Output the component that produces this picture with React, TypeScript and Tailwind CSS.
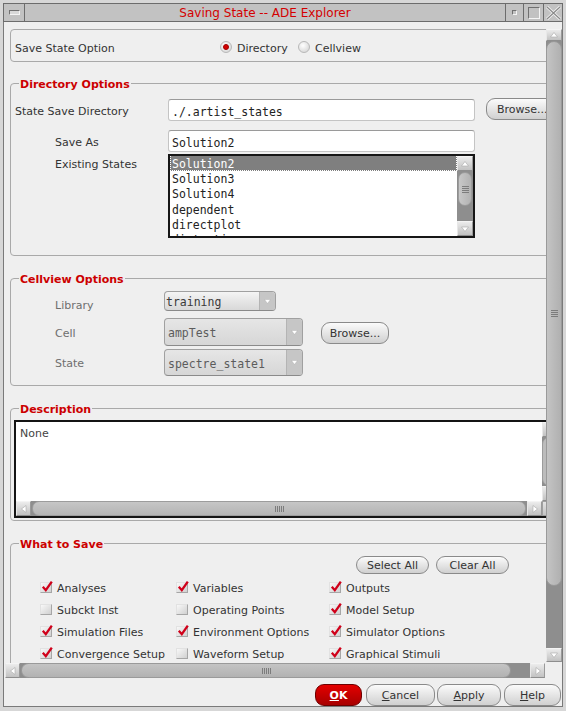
import React from "react";

const MONO = "font-['DejaVu_Sans_Mono',monospace]";

function Tri({ dir }: { dir: "up" | "down" | "left" | "right" }) {
  const pts = {
    up: "1.5,7 5,2.5 8.5,7",
    down: "1.5,3 5,7.5 8.5,3",
    left: "7,1.5 2.5,5 7,8.5",
    right: "3,1.5 7.5,5 3,8.5",
  }[dir];
  return (
    <svg width="10" height="10" viewBox="0 0 10 10">
      <polygon points={pts} fill="#ffffff" stroke="#a8a8a8" strokeWidth="0.6" />
    </svg>
  );
}

function SBtn({ dir, className = "" }: { dir: "up" | "down" | "left" | "right"; className?: string }) {
  return (
    <div
      className={`flex items-center justify-center shrink-0 bg-linear-to-b from-[#ececec] to-[#c2c2c2] border border-t-[#f4f4f4] border-l-[#e8e8e8] border-b-[#8e8e8e] border-r-[#9a9a9a] ${className}`}
    >
      <Tri dir={dir} />
    </div>
  );
}

function HGrip() {
  return (
    <div className="flex gap-[1px]">
      {[0, 1, 2, 3, 4].map((i) => (
        <div key={i} className="w-[1px] h-[6px] bg-[#7c7c7c]" />
      ))}
    </div>
  );
}

function VGrip() {
  return (
    <div className="flex flex-col gap-[1px]">
      {[0, 1, 2, 3].map((i) => (
        <div key={i} className="w-[7px] h-[1px] bg-[#7c7c7c]" />
      ))}
    </div>
  );
}

function Radio({ on }: { on?: boolean }) {
  return (
    <div className="w-[12px] h-[12px] rounded-full border border-[#b8b8b8] bg-[radial-gradient(circle_at_40%_35%,#ffffff,#cfcfcf)] flex items-center justify-center shrink-0">
      {on && <div className="w-[6px] h-[6px] rounded-full bg-[#d40000] border border-[#a00000]" />}
    </div>
  );
}

function CB({ on }: { on?: boolean }) {
  return (
    <div className="relative w-[12px] h-[11px] shrink-0 border border-t-[#e2e2e2] border-l-[#e2e2e2] border-b-[#a6a6a6] border-r-[#a6a6a6] bg-linear-to-br from-[#f8f8f8] to-[#d0d0d0]">
      {on && (
        <svg className="absolute left-[0px] top-[-3px]" width="13" height="13" viewBox="0 0 13 13">
          <path d="M1.8 6.8 L4.8 10.2 L10.8 1.6" fill="none" stroke="#d0001a" strokeWidth="2.3" />
        </svg>
      )}
    </div>
  );
}

function Btn({ children, className = "" }: { children: React.ReactNode; className?: string }) {
  return (
    <div
      className={`flex items-center justify-center shrink-0 rounded-[9px] border border-[#8a8a8a] bg-linear-to-b from-[#fbfbfb] to-[#d0d0d0] text-[#333] pt-[3px] ${className}`}
    >
      {children}
    </div>
  );
}

function Group({ title, className = "", children }: { title?: string; className?: string; children?: React.ReactNode }) {
  return (
    <div className={`relative w-[548px] border border-[#a9a9a9] rounded-[4px] shrink-0 ${className}`}>
      {title && (
        <span className="absolute left-[8px] top-[-6px] px-[1px] bg-[#efefef] text-[#cc0000] font-bold text-[11px] leading-[13px]">
          {title}
        </span>
      )}
      {children}
    </div>
  );
}

function Input({ value }: { value: string }) {
  return (
    <div
      className={`w-[307px] h-[22px] bg-white rounded-[3px] border border-[#c4c4c4] border-t-[#9a9a9a] flex items-center pl-[3px] pt-[5px] text-[11.5px] text-[#222] ${MONO}`}
    >
      {value}
    </div>
  );
}

function Combo({
  text,
  className,
  active,
}: {
  text: string;
  className: string;
  active?: boolean;
}) {
  return (
    <div
      className={`flex border border-[#a0a0a0] border-b-[#8a8a8a] rounded-[4px] overflow-hidden ${className} ${
        active
          ? "bg-linear-to-b from-[#f4f4f4] to-[#d8d8d8] text-[#3a3a3a]"
          : "bg-linear-to-b from-[#e6e6e6] to-[#d6d6d6] text-[#5c5c5c]"
      }`}
    >
      <div className={`flex-1 flex items-center ${active ? "pl-[1px]" : "pl-[3px]"} pt-[4px] text-[11.5px] ${MONO}`}>{text}</div>
      <div className="w-[16px] flex items-center justify-center bg-[#c6c6c6] border-l border-[#b4b4b4]">
        <svg width="7" height="5" viewBox="0 0 7 5">
          <polygon points="0.5,0.5 6.5,0.5 3.5,4.5" fill="#ffffff" stroke="#aaaaaa" strokeWidth="0.4" />
        </svg>
      </div>
    </div>
  );
}

const states = ["Solution2", "Solution3", "Solution4", "dependent", "directplot", "distortion"];

const checks: [string, boolean][][] = [
  [
    ["Analyses", true],
    ["Variables", true],
    ["Outputs", true],
  ],
  [
    ["Subckt Inst", false],
    ["Operating Points", false],
    ["Model Setup", true],
  ],
  [
    ["Simulation Files", true],
    ["Environment Options", true],
    ["Simulator Options", true],
  ],
  [
    ["Convergence Setup", true],
    ["Waveform Setup", false],
    ["Graphical Stimuli", true],
  ],
];

export default function App() {
  return (
    <div className="w-[566px] h-[711px] overflow-hidden bg-[#d7d7d7] font-['DejaVu_Sans',sans-serif] text-[11px] text-[#333] flex flex-col">
      {/* Title bar */}
      <div className="h-[22px] pt-[3px] px-[3px] shrink-0">
        <div className="h-[19px] border border-[#6c6c6c] bg-[#c2c2c2] flex">
          <div className="w-[21px] border-r border-[#6c6c6c] flex items-center justify-center">
            <div className="w-[11px] h-[5px] border border-[#707070] border-b-[#f4f4f4] border-r-[#f4f4f4] bg-[#d8d8d8]" />
          </div>
          <div className="flex-1 text-center text-[12px] leading-[19px] text-[#d40000]">Saving State -- ADE Explorer</div>
          <div className="w-[18px] border-l border-[#6c6c6c] flex items-center justify-center">
            <div className="w-[5px] h-[5px] border border-[#707070] border-b-[#f4f4f4] border-r-[#f4f4f4]" />
          </div>
          <div className="w-[20px] border-l border-[#6c6c6c] flex items-center justify-center">
            <div className="w-[12px] h-[12px] border border-[#707070] border-b-[#f4f4f4] border-r-[#f4f4f4]" />
          </div>
          <div className="w-[19px] border-l border-[#6c6c6c] flex items-center justify-center">
            <svg width="15" height="14" viewBox="0 0 15 14">
              <path d="M1 1 L14 13 M14 1 L1 13" stroke="#f2f2f2" strokeWidth="3" />
              <path d="M1 1 L14 13 M14 1 L1 13" stroke="#8a8a8a" strokeWidth="1.2" />
            </svg>
          </div>
        </div>
      </div>

      {/* Body */}
      <div className="h-[689px] flex pl-[3px] shrink-0">
        <div className="w-[560px] h-[685px] border-l border-r border-b border-[#7a7a7a] bg-[#efefef] flex flex-col">
          {/* viewport + vscroll */}
          <div className="h-[641px] flex pl-[1px] shrink-0">
            <div className="w-[541px] h-[641px] overflow-hidden">
              <div className="w-[570px] pl-[5px] pt-[7px] flex flex-col">
                {/* Save state option */}
                <Group className="h-[33px]">
                  <div className="h-full flex items-center pl-[4px] pt-[3px]">
                    <span className="w-[205px] pt-[4px]">Save State Option</span>
                    <Radio on />
                    <span className="ml-[5px] w-[61px] pt-[4px]">Directory</span>
                    <Radio />
                    <span className="ml-[5px] pt-[4px]">Cellview</span>
                  </div>
                </Group>

                {/* Directory options */}
                <Group title="Directory Options" className="h-[173px] mt-[21px]">
                  <div className="pt-[15px] flex flex-col">
                    <div className="h-[22px] flex items-center">
                      <span className="w-[157px] pl-[4px] pt-[4px]">State Save Directory</span>
                      <Input value="./.artist_states" />
                      <Btn className="ml-[11px] w-[70px] h-[22px] rounded-[8px] justify-start pl-[10px] mt-[-2px]">Browse...</Btn>
                    </div>
                    <div className="h-[22px] mt-[9px] flex items-center">
                      <span className="w-[157px] pl-[44px] pt-[4px]">Save As</span>
                      <Input value="Solution2" />
                    </div>
                    <div className="mt-[2px] flex items-start">
                      <span className="w-[157px] pl-[44px] pt-[3px] leading-[15px]">Existing States</span>
                      <div className="w-[307px] h-[84px] border-2 border-[#161616] bg-white flex">
                        <div className={`flex-1 overflow-hidden text-[11.5px] text-[#222] ${MONO}`}>
                          {states.map((s, i) =>
                            i === 0 ? (
                              <div
                                key={s}
                                className="h-[15px] leading-[14px] pt-[1px] bg-[#7f7f7f] text-white border-b border-l border-r border-dotted border-white pl-[1px]"
                              >
                                {s}
                              </div>
                            ) : (
                              <div key={s} className={`h-[15px] leading-[15px] pl-[2px] ${i >= 3 ? "pt-[2px]" : "pt-[1px]"}`}>
                                {s}
                              </div>
                            )
                          )}
                        </div>
                        <div className="w-[16px] flex flex-col">
                          <SBtn dir="up" className="h-[15px]" />
                          <div className="flex-1 bg-[#8e8e8e] pt-[1px]">
                            <div className="h-[34px] mx-[1px] rounded-[7px] bg-linear-to-r from-[#c8c8c8] to-[#b2b2b2] border border-[#9c9c9c] flex items-center justify-center">
                              <VGrip />
                            </div>
                          </div>
                          <SBtn dir="down" className="h-[15px]" />
                        </div>
                      </div>
                    </div>
                  </div>
                </Group>

                {/* Cellview options */}
                <Group title="Cellview Options" className="h-[108px] mt-[22px]">
                  <div className="pt-[12px] flex flex-col text-[#6e6e6e]">
                    <div className="h-[27px] flex items-start">
                      <span className="w-[153px] pl-[44px] h-[27px] pt-[4px] flex items-center">Library</span>
                      <Combo text="training" className="w-[112px] h-[20px]" active />
                    </div>
                    <div className="h-[28px] flex items-center">
                      <span className="w-[153px] pl-[44px] pt-[4px]">Cell</span>
                      <Combo text="ampTest" className="w-[139px] h-[28px]" />
                      <Btn className="ml-[18px] w-[68px] h-[22px] rounded-[8px] text-[#6a6a6a] mt-[2px]">Browse...</Btn>
                    </div>
                    <div className="h-[27px] mt-[3px] flex items-center">
                      <span className="w-[153px] pl-[44px] pt-[4px]">State</span>
                      <Combo text="spectre_state1" className="w-[139px] h-[27px]" />
                    </div>
                  </div>
                </Group>

                {/* Description */}
                <Group title="Description" className="h-[113px] mt-[22px]">
                  <div className="pt-[11px] pl-[3px]">
                    <div className="w-[546px] h-[98px] border-2 border-[#141414] bg-white flex flex-col">
                      <div className="flex-1 flex">
                        <div className="flex-1 pl-[4px] pt-[5px] leading-[13px] text-[#444]">None</div>
                        <div className="w-[16px] flex flex-col">
                          <SBtn dir="up" className="h-[15px]" />
                          <div className="flex-1 bg-[#8e8e8e]">
                            <div className="h-full rounded-[7px] bg-[#bcbcbc] border border-[#9c9c9c]" />
                          </div>
                          <SBtn dir="down" className="h-[15px]" />
                        </div>
                      </div>
                      <div className="h-[15px] flex">
                        <SBtn dir="left" className="w-[15px]" />
                        <div className="flex-1 bg-[#8e8e8e] px-[1px]">
                          <div className="h-full rounded-[7px] bg-linear-to-b from-[#c6c6c6] to-[#b4b4b4] border border-[#9c9c9c] flex items-center justify-center">
                            <HGrip />
                          </div>
                        </div>
                        <SBtn dir="right" className="w-[15px]" />
                        <div className="w-[16px] bg-linear-to-b from-[#e4e4e4] to-[#c4c4c4] border border-[#a0a0a0]" />
                      </div>
                    </div>
                  </div>
                </Group>

                {/* What to save */}
                <Group title="What to Save" className="h-[140px] mt-[22px]">
                  <div className="pt-[12px] flex flex-col">
                    <div className="flex pl-[345px]">
                      <Btn className="w-[73px] h-[18px]">Select All</Btn>
                      <Btn className="ml-[7px] w-[73px] h-[18px]">Clear All</Btn>
                    </div>
                    <div className="mt-[2px] pl-[29px] flex flex-col">
                      {checks.map((row, ri) => (
                        <div key={ri} className="h-[22px] flex items-center">
                          {row.map(([label, on], ci) => (
                            <div
                              key={label}
                              className={`flex items-center gap-[5px] ${ci === 0 ? "w-[136px]" : ci === 1 ? "w-[153px]" : ""}`}
                            >
                              <CB on={on} />
                              <span className="pt-[4px]">{label}</span>
                            </div>
                          ))}
                        </div>
                      ))}
                    </div>
                  </div>
                </Group>
              </div>
            </div>

            {/* main vertical scrollbar */}
            <div className="w-[16px] flex flex-col pt-[7px] pb-[1px]">
              <SBtn dir="up" className="h-[12px]" />
              <div className="flex-1 bg-[#8e8e8e] flex flex-col">
                <div className="h-[545px] rounded-[8px] bg-linear-to-r from-[#c4c4c4] to-[#b0b0b0] border border-[#9a9a9a] flex flex-col items-center justify-center">
                  <VGrip />
                </div>
              </div>
              <SBtn dir="down" className="h-[14px]" />
            </div>
          </div>

          {/* main horizontal scrollbar */}
          <div className="h-[15px] flex pl-[1px] shrink-0">
            <SBtn dir="left" className="w-[15px]" />
            <div className="w-[510px] bg-[#8e8e8e] flex">
              <div className="w-[490px] ml-[1px] rounded-[8px] bg-linear-to-b from-[#c4c4c4] to-[#b2b2b2] border border-[#9a9a9a] flex items-center justify-center">
                <HGrip />
              </div>
            </div>
            <SBtn dir="right" className="w-[15px]" />
          </div>

          {/* button row */}
          <div className="h-[28px] flex justify-end items-start pt-[6px] pr-[1px] shrink-0">
            <div className="w-[47px] h-[22px] pt-[3px] flex items-center justify-center rounded-[9px] border border-[#6e0000] bg-linear-to-b from-[#e40000] to-[#a80000] text-white font-bold">
              <span>
                <span className="underline">O</span>K
              </span>
            </div>
            <Btn className="ml-[4px] w-[69px] h-[22px]">
              <span>
                <span className="underline">C</span>ancel
              </span>
            </Btn>
            <Btn className="ml-[2px] w-[64px] h-[22px]">
              <span>
                <span className="underline">A</span>pply
              </span>
            </Btn>
            <Btn className="ml-[3px] w-[57px] h-[22px]">
              <span>
                <span className="underline">H</span>elp
              </span>
            </Btn>
          </div>
        </div>
      </div>
    </div>
  );
}
